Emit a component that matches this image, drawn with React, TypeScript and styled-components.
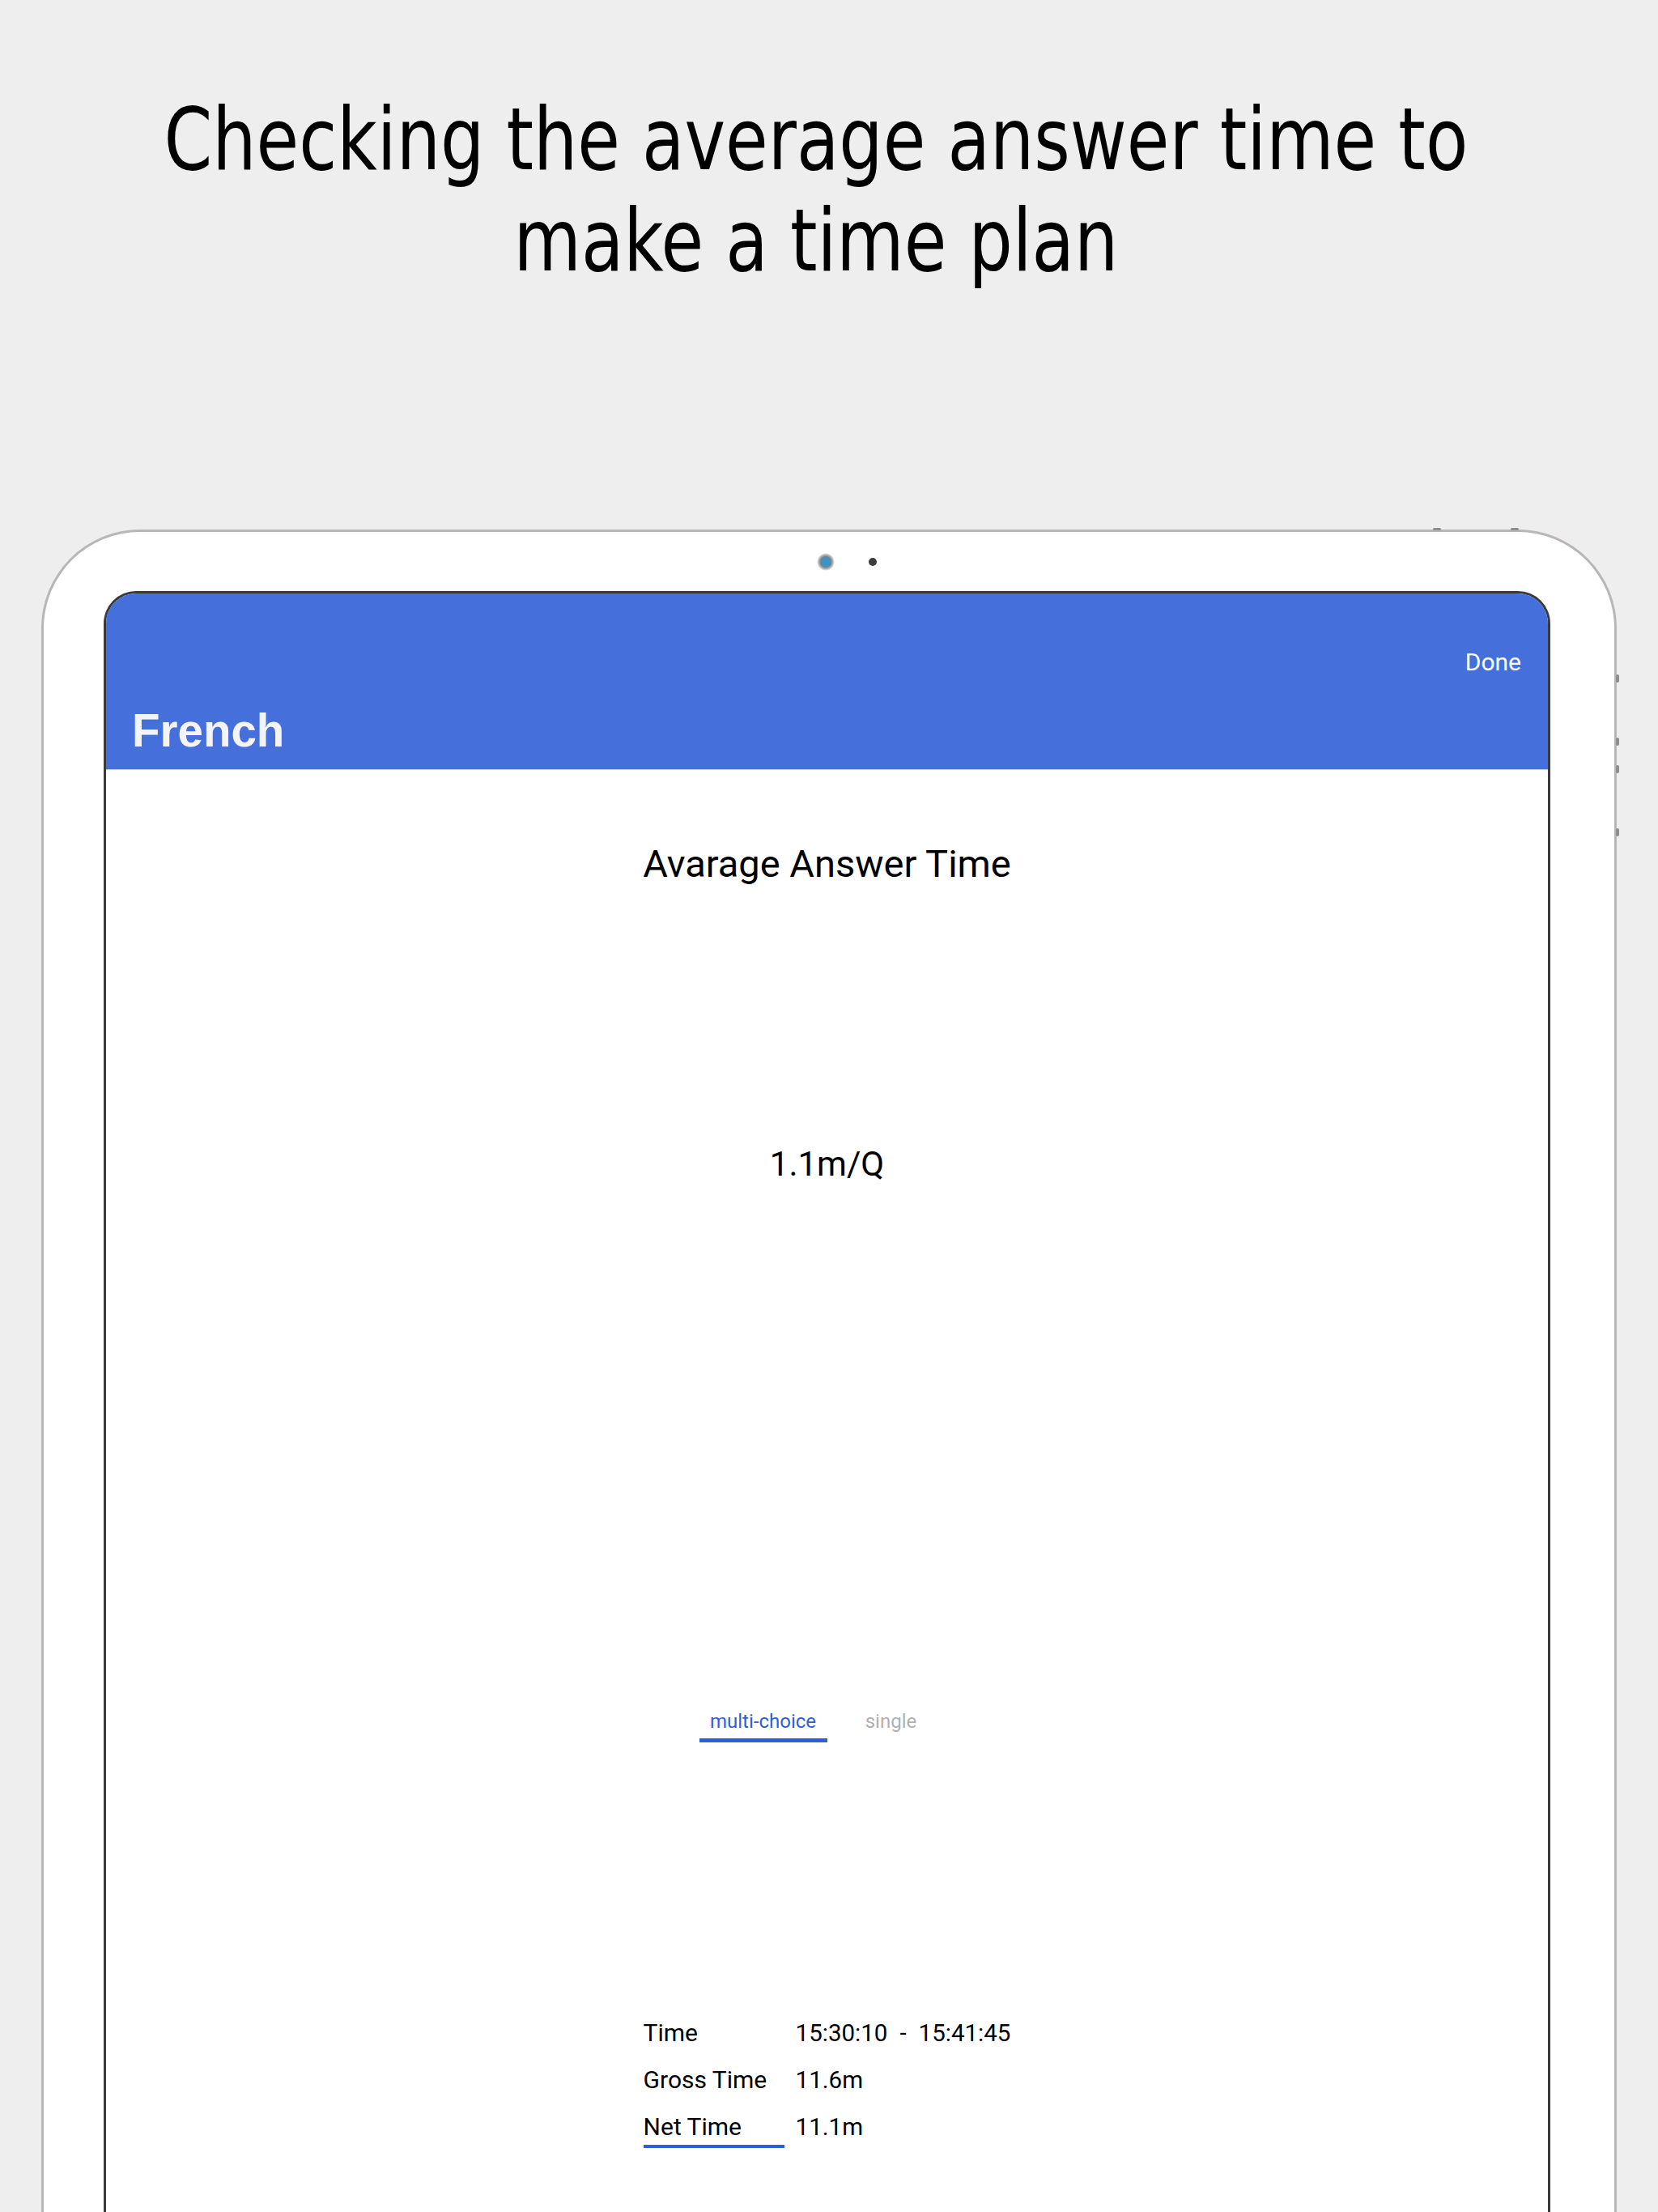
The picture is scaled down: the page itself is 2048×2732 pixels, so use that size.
import React from "react";
import styled, { createGlobalStyle } from "styled-components";

const GlobalStyle = createGlobalStyle`
  html, body {
    margin: 0;
    padding: 0;
    background: #eeeeee;
  }
  body {
    font-family: Roboto, "Liberation Sans", sans-serif;
    -webkit-font-smoothing: antialiased;
  }
`;

const Page = styled.div`
  height: 2732px;
  overflow: hidden;
  background: #eeeeee;
  display: flex;
  flex-direction: column;
  align-items: center;
`;

const Headline = styled.h1`
  flex: none;
  margin: 110px 32px 0 0;
  font-family: "DejaVu Sans Condensed", "DejaVu Sans", sans-serif;
  font-weight: normal;
  font-size: 107px;
  line-height: 125px;
  color: #000;
  text-align: center;
  white-space: nowrap;
  transform: scaleX(0.889);
`;

const Device = styled.div`
  position: relative;
  flex: none;
  box-sizing: border-box;
  width: 1946px;
  min-height: 2300px;
  margin-top: 294px;
  padding: 0 79px 0 74px;
  background: #ffffff;
  border: 3px solid #b9b6b6;
  border-bottom: none;
  border-radius: 122px 122px 0 0;
  display: flex;
  flex-direction: column;
`;

const SideKey = styled.span<{ $top: number }>`
  position: absolute;
  right: -6px;
  top: ${(p) => p.$top}px;
  width: 4px;
  height: 10px;
  border-radius: 2px;
  background: #8e8e8e;
`;

const TopKey = styled.span<{ $left: number }>`
  position: absolute;
  top: -5px;
  left: ${(p) => p.$left}px;
  width: 10px;
  height: 3px;
  border-radius: 2px;
  background: #8e8e8e;
`;

const Bezel = styled.div`
  flex: none;
  height: 73px;
  padding-left: 48px;
  display: flex;
  align-items: center;
  justify-content: center;
  gap: 42px;
`;

const Camera = styled.span`
  width: 22px;
  height: 22px;
  border-radius: 50%;
  background: radial-gradient(
    circle,
    #3f93c4 0,
    #3f93c4 5px,
    #6f8590 6.5px,
    #b9b9b9 9px,
    rgba(255, 255, 255, 0) 11px
  );
`;

const Sensor = styled.span`
  width: 10px;
  height: 10px;
  border-radius: 50%;
  background: #3d3d3d;
`;

const Screen = styled.div`
  flex: 1;
  display: flex;
  flex-direction: column;
  background: #ffffff;
  border: 3px solid #3a3a3a;
  border-bottom: none;
  border-radius: 40px 40px 0 0;
  overflow: hidden;
`;

const NavBar = styled.header`
  flex: none;
  background: #4570dc;
  padding: 67px 33px 15px 32px;
  border-bottom: 1px solid #c9ccd4;
  display: flex;
  flex-direction: column;
`;

const NavActions = styled.div`
  display: flex;
  justify-content: flex-end;
  margin-bottom: 35px;
`;

const DoneButton = styled.button`
  border: none;
  background: none;
  padding: 0;
  font-family: Roboto, "Liberation Sans", sans-serif;
  font-size: 30px;
  line-height: 36px;
  color: #ffffff;
  cursor: pointer;
`;

const NavTitle = styled.h2`
  margin: 0;
  font-family: "Liberation Sans", Arial, sans-serif;
  font-weight: bold;
  font-size: 56.5px;
  line-height: 64px;
  color: #f4f4f6;
`;

const Content = styled.main`
  flex: 1;
  display: flex;
  flex-direction: column;
  align-items: center;
  color: #000;
`;

const SectionTitle = styled.div`
  margin-top: 88px;
  font-size: 47px;
  line-height: 56px;
`;

const AverageValue = styled.div`
  margin-top: 317px;
  font-size: 42px;
  line-height: 52px;
`;

const Tabs = styled.div`
  margin-top: 648px;
  display: flex;
`;

const Tab = styled.div<{ $active?: boolean }>`
  width: 158px;
  text-align: center;
  font-size: 24px;
  line-height: 28px;
  padding-bottom: 7px;
  color: ${(p) => (p.$active ? "#2f5fd8" : "#b0b0b0")};
  border-bottom: 5px solid ${(p) => (p.$active ? "#2c5fdc" : "transparent")};
`;

const Stats = styled.div`
  margin-top: 339px;
  display: grid;
  grid-template-columns: 174px auto;
  column-gap: 14px;
  row-gap: 12px;
`;

const StatLabel = styled.div<{ $active?: boolean }>`
  font-size: 30px;
  line-height: 40px;
  padding-bottom: 2px;
  border-bottom: 4px solid ${(p) => (p.$active ? "#2c5fdc" : "transparent")};
`;

const StatValue = styled.div`
  font-size: 29.5px;
  line-height: 40px;
  white-space: nowrap;
`;

const stats = [
  { label: "Time", value: "15:30:10\u2002-\u200215:41:45" },
  { label: "Gross Time", value: "11.6m" },
  { label: "Net Time", value: "11.1m", active: true },
];

export default function App() {
  return (
    <>
      <GlobalStyle />
      <Page>
        <Headline>
          Checking the average answer time to
          <br />
          make a time plan
        </Headline>
        <Device>
          <TopKey $left={1716} />
          <TopKey $left={1812} />
          <SideKey $top={176} />
          <SideKey $top={254} />
          <SideKey $top={288} />
          <SideKey $top={366} />
          <Bezel>
            <Camera />
            <Sensor />
          </Bezel>
          <Screen>
            <NavBar>
              <NavActions>
                <DoneButton>Done</DoneButton>
              </NavActions>
              <NavTitle>French</NavTitle>
            </NavBar>
            <Content>
              <SectionTitle>Avarage Answer Time</SectionTitle>
              <AverageValue>1.1m/Q</AverageValue>
              <Tabs>
                <Tab $active>multi-choice</Tab>
                <Tab>single</Tab>
              </Tabs>
              <Stats>
                {stats.map((s) => (
                  <React.Fragment key={s.label}>
                    <StatLabel $active={s.active}>{s.label}</StatLabel>
                    <StatValue>{s.value}</StatValue>
                  </React.Fragment>
                ))}
              </Stats>
            </Content>
          </Screen>
        </Device>
      </Page>
    </>
  );
}
